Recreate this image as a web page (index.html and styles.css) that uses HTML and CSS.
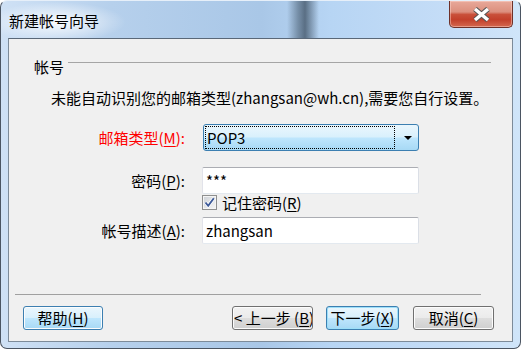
FILE: index.html
```html
<!DOCTYPE html>
<html>

<head>
    <meta charset="UTF-8" />
    <title>新建帐号向导</title>
    <link rel="stylesheet" href="styles.css">
</head>

<body>
    <div class="window">
        <div class="titlebar">
            <span class="title">新建帐号向导</span>
            <div class="close">
                <svg width="19" height="15" viewBox="0 0 19 15">
                    <path d="M3 2 L16 13 M16 2 L3 13" stroke="#555" stroke-width="5.5" fill="none" />
                    <path d="M3 2 L16 13 M16 2 L3 13" stroke="#fff" stroke-width="3.5" fill="none" />
                </svg>
            </div>
        </div>
        <div class="client">
            <div class="group-head">
                <span>帐号</span>
                <div class="group-line"></div>
            </div>
            <p class="message">未能自动识别您的邮箱类型(zhangsan@wh.cn),需要您自行设置。</p>
            <div class="form">
                <div class="row row-combo">
                    <label class="field-label required">邮箱类型(<u>M</u>):</label>
                    <div class="combo">
                        <span class="combo-value">POP3</span>
                        <span class="combo-arrow"><i></i></span>
                    </div>
                </div>
                <div class="row">
                    <label class="field-label">密码(<u>P</u>):</label>
                    <input class="textbox" type="text" value="***" readonly>
                </div>
                <div class="row row-check">
                    <span class="check-box">
                        <svg width="13" height="13" viewBox="0 0 13 13">
                            <path d="M2.5 6.5 L5.2 9.8 L10.8 2.2" stroke="#fff" stroke-width="3.4" fill="none" />
                            <path d="M2.5 6.5 L5.2 9.8 L10.8 2.2" stroke="#3d5a99" stroke-width="1.9" fill="none" />
                        </svg>
                    </span>
                    <span class="check-label">记住密码(<u>R</u>)</span>
                </div>
                <div class="row">
                    <label class="field-label">帐号描述(<u>A</u>):</label>
                    <input class="textbox" type="text" value="zhangsan" readonly>
                </div>
            </div>
            <div class="separator"></div>
            <div class="buttons">
                <button class="btn btn-help btn-blue">帮助(<u>H</u>)</button>
                <span class="spacer"></span>
                <button class="btn btn-back">&lt; 上一步 (<u>B</u>)</button>
                <button class="btn btn-next btn-blue btn-default">下一步(<u>X</u>)</button>
                <button class="btn btn-cancel">取消(<u>C</u>)</button>
            </div>
        </div>
    </div>
</body>

</html>
```

FILE: styles.css
```css
* {
    margin: 0;
    padding: 0;
}

body {
    background: #fff;
    font-family: "Noto Sans CJK SC", "Noto Sans", sans-serif;
    font-size: 15px;
    color: #000;
}

u {
    text-decoration: underline;
    text-underline-offset: 2px;
}

.window {
    width: 521px;
    height: 349px;
    box-sizing: border-box;
    border: 1px solid #4b5562;
    border-top: 1px solid #e6eff9;
    border-radius: 7px;
    padding: 0 7px 6px;
    display: flex;
    flex-direction: column;
    background:
        radial-gradient(ellipse 70px 20px at 55px 21px, rgba(255, 255, 255, 0.9), rgba(255, 255, 255, 0)),
        linear-gradient(90deg, rgba(70, 90, 110, 0) 286px, rgba(70, 90, 110, 0.55) 297px, rgba(60, 78, 96, 0.75) 304px, rgba(70, 90, 110, 0) 318px) 0 0 / 100% 37px no-repeat,
        linear-gradient(90deg, #cfe1f5 0, #b6d0ec 110px, #a9c7e7 260px, #b7d5f4 330px, #c5ddf7 450px, #d0e5f9 100%);
}

.titlebar {
    height: 37px;
    display: flex;
    align-items: flex-start;
}

.title {
    line-height: 20px;
    margin: 10px 0 0 1px;
}

.close {
    margin-left: auto;
    width: 64px;
    height: 27px;
    box-sizing: border-box;
    border: 1px solid #6e3129;
    border-top: none;
    border-radius: 0 0 5px 5px;
    background: linear-gradient(#e8a99a 0, #dc8f7e 42%, #c9503a 52%, #c3402b 72%, #d4684f 100%);
    box-shadow: inset 0 0 0 1px rgba(255, 220, 210, 0.45);
    display: flex;
    align-items: center;
    justify-content: center;
}

.client {
    flex: 1;
    background: #f0f0f0;
    border: 1px solid #7d8b99;
    border-top-color: #5a6878;
    display: flex;
    flex-direction: column;
}

.group-head {
    display: flex;
    align-items: flex-start;
    padding: 18px 21px 0 25px;
    line-height: 20px;
}

.group-line {
    flex: 1;
    height: 1px;
    margin: 5px 0 0 4px;
    background: #a5a5a5;
}

.message {
    margin: 11px 0 0 42px;
    line-height: 20px;
    white-space: nowrap;
}

.form {
    margin-top: 16px;
}

.row {
    display: flex;
    align-items: center;
    height: 27px;
}

.row-combo {
    margin-bottom: 16px;
}

.field-label {
    width: 176px;
    margin-right: 17px;
    text-align: right;
    line-height: 20px;
    white-space: nowrap;
}

.required {
    color: #f00;
}

.combo {
    width: 216px;
    height: 27px;
    margin-left: 1px;
    box-sizing: border-box;
    border: 1px solid #3c7fb1;
    border-radius: 3px;
    padding: 1px;
    display: flex;
    background: linear-gradient(#eaf6fd 0, #d9f0fc 48%, #bee6fd 52%, #a7d9f5 100%);
}

.combo-value {
    width: 190px;
    height: 23px;
    box-sizing: border-box;
    border: 1px dotted #000;
    padding-left: 1px;
    line-height: 21px;
}

.combo-arrow {
    flex: 1;
    display: flex;
    align-items: center;
    justify-content: center;
    padding-left: 3px;
}

.combo-arrow i {
    border-left: 4px solid transparent;
    border-right: 4px solid transparent;
    border-top: 4px solid #000;
}

.textbox {
    width: 217px;
    height: 27px;
    box-sizing: border-box;
    border: 1px solid;
    border-color: #abadb3 #dbdfe6 #e3e9ef #e2e3ea;
    border-radius: 2px;
    background: #fff;
    font: inherit;
    color: #000;
    padding: 0 3px;
    outline: none;
}

.row-check {
    height: 23px;
    align-items: flex-start;
    padding-left: 193px;
}

.check-box {
    width: 15px;
    height: 15px;
    box-sizing: border-box;
    margin-top: 1px;
    border: 1px solid #8e8f8f;
    background: linear-gradient(135deg, #cdd1d6, #f6f6f6);
    box-shadow: inset 0 0 0 1px #f4f4f4;
    display: flex;
    align-items: center;
    justify-content: center;
}

.check-label {
    margin-left: 5px;
    line-height: 17px;
}

.separator {
    margin: auto 31px 11px 6px;
    height: 1px;
    background: #a0a0a0;
}

.buttons {
    display: flex;
    padding: 0 18px 11px 14px;
}

.spacer {
    flex: 1;
}

.btn {
    height: 24px;
    box-sizing: border-box;
    border: 1px solid #707070;
    border-radius: 3px;
    background: linear-gradient(#f2f2f2 0, #ebebeb 48%, #dddddd 52%, #cfcfcf 100%);
    box-shadow: inset 0 0 0 1px #fcfcfc;
    font: inherit;
    color: #000;
    line-height: 20px;
    white-space: nowrap;
    overflow: hidden;
}

.btn-blue {
    border-color: #3c7fb1;
    background: linear-gradient(#eaf6fd 0, #d9f0fc 48%, #bee6fd 52%, #a7d9f5 100%);
}

.btn-default {
    box-shadow: inset 0 0 0 1px #9ddff9;
}

.btn-help {
    width: 80px;
}

.btn-back {
    width: 81px;
    margin-right: 13px;
    text-align: left;
    padding-left: 1px;
}

.btn-next {
    width: 73px;
    margin-right: 14px;
}

.btn-cancel {
    width: 81px;
}
```
